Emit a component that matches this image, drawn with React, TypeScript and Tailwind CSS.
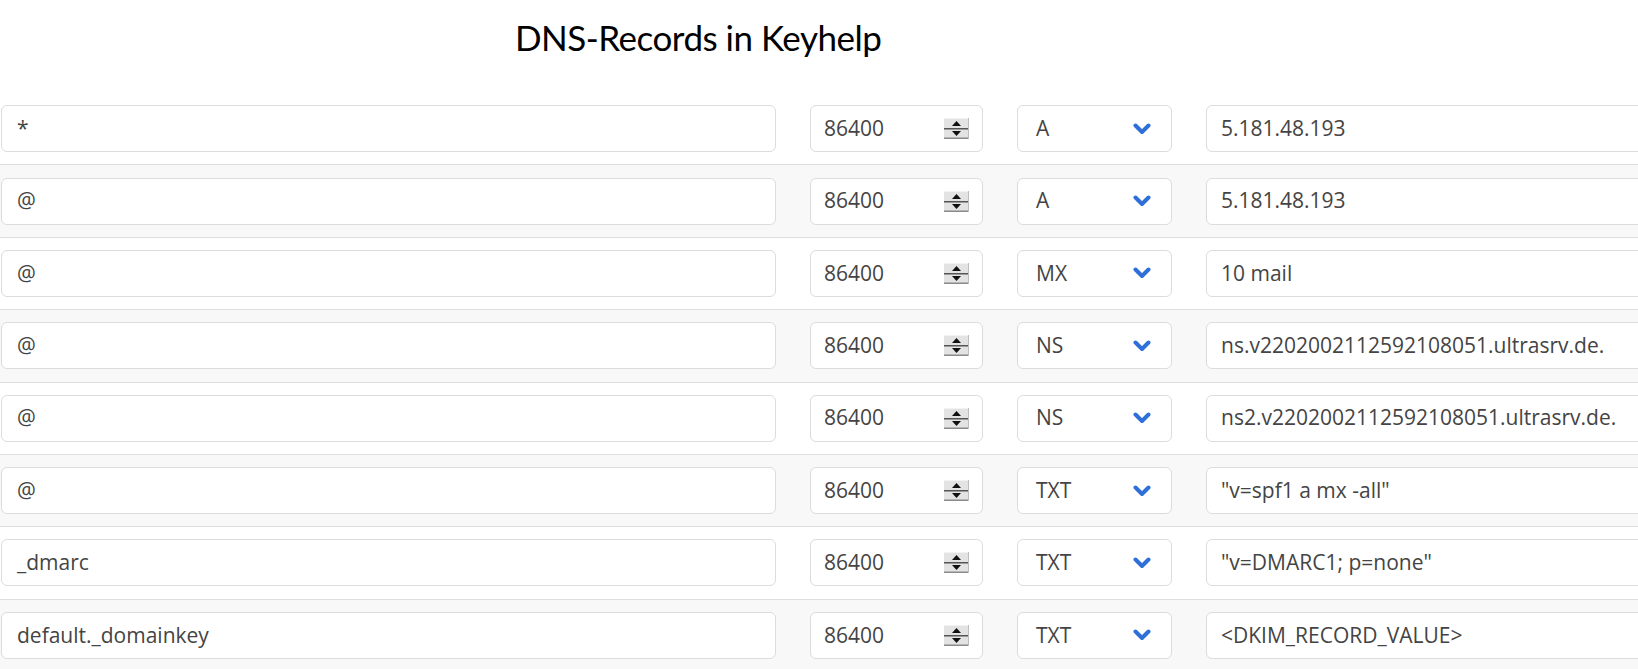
import React from "react";

const rows = [
  { name: "*", type: "A", value: "5.181.48.193" },
  { name: "@", type: "A", value: "5.181.48.193" },
  { name: "@", type: "MX", value: "10 mail" },
  { name: "@", type: "NS", value: "ns.v2202002112592108051.ultrasrv.de." },
  { name: "@", type: "NS", value: "ns2.v2202002112592108051.ultrasrv.de." },
  { name: "@", type: "TXT", value: '"v=spf1 a mx -all"' },
  { name: "_dmarc", type: "TXT", value: '"v=DMARC1; p=none"' },
  { name: "default._domainkey", type: "TXT", value: "<DKIM_RECORD_VALUE>" },
];

function Spinner() {
  return (
    <svg width="25" height="21" viewBox="0 0 25 21" className="shrink-0">
      <rect x="0" y="0" width="25" height="21" fill="#e3e3e3" />
      <rect x="0" y="0" width="25" height="1" fill="#f2f2f2" />
      <rect x="0" y="10" width="25" height="1.5" fill="#555555" />
      <rect x="0" y="19.5" width="25" height="1.5" fill="#8a8a8a" />
      <rect x="24" y="0" width="1" height="21" fill="#bdbdbd" />
      <polygon points="12.5,3 17,8 8,8" fill="#111" />
      <polygon points="8,13 17,13 12.5,18" fill="#111" />
    </svg>
  );
}

function Chevron() {
  return (
    <svg width="18" height="12" viewBox="0 0 18 12" className="shrink-0">
      <path d="M2.5 2.5 L9 9 L15.5 2.5" fill="none" stroke="#2f6fd8" strokeWidth="4" strokeLinecap="round" strokeLinejoin="round" />
    </svg>
  );
}

const box =
  "h-[47px] rounded-[6px] border border-[#dcdcdc] bg-white flex items-center text-[21px] text-[#444444]";

export default function App() {
  return (
    <div
      className="w-[1638px] h-[669px] overflow-hidden bg-white"
      style={{ fontFamily: '"Open Sans", "Noto Sans", sans-serif' }}
    >
      <div className="h-[93px] pl-[515px] pt-[14px]">
        <h1
          className="text-[35px] leading-[46px] text-black tracking-[-0.5px]"
          style={{ fontFamily: 'Lato, "Noto Sans", sans-serif' }}
        >
          DNS-Records in Keyhelp
        </h1>
      </div>
      <div className="flex flex-col">
        {rows.map((r, i) => (
          <div
            key={i}
            className={
              "flex gap-[34px] pl-px py-[12.2px] " +
              (i === 0 ? "" : "border-t border-[#dedede] ") +
              (i % 2 === 1 ? "bg-[#f8f8f8]" : "bg-white")
            }
          >
            <div className={box + " w-[775px] shrink-0 pl-[15px]"}>{r.name}</div>
            <div className={box + " w-[173px] shrink-0 pl-[13px] pr-[13px] justify-between"}>
              <span>86400</span>
              <Spinner />
            </div>
            <div className={box + " w-[155px] shrink-0 pl-[18px] pr-[20px] justify-between"}>
              <span>{r.type}</span>
              <Chevron />
            </div>
            <div className={box + " w-[600px] shrink-0 pl-[14px]"}>{r.value}</div>
          </div>
        ))}
      </div>
    </div>
  );
}
